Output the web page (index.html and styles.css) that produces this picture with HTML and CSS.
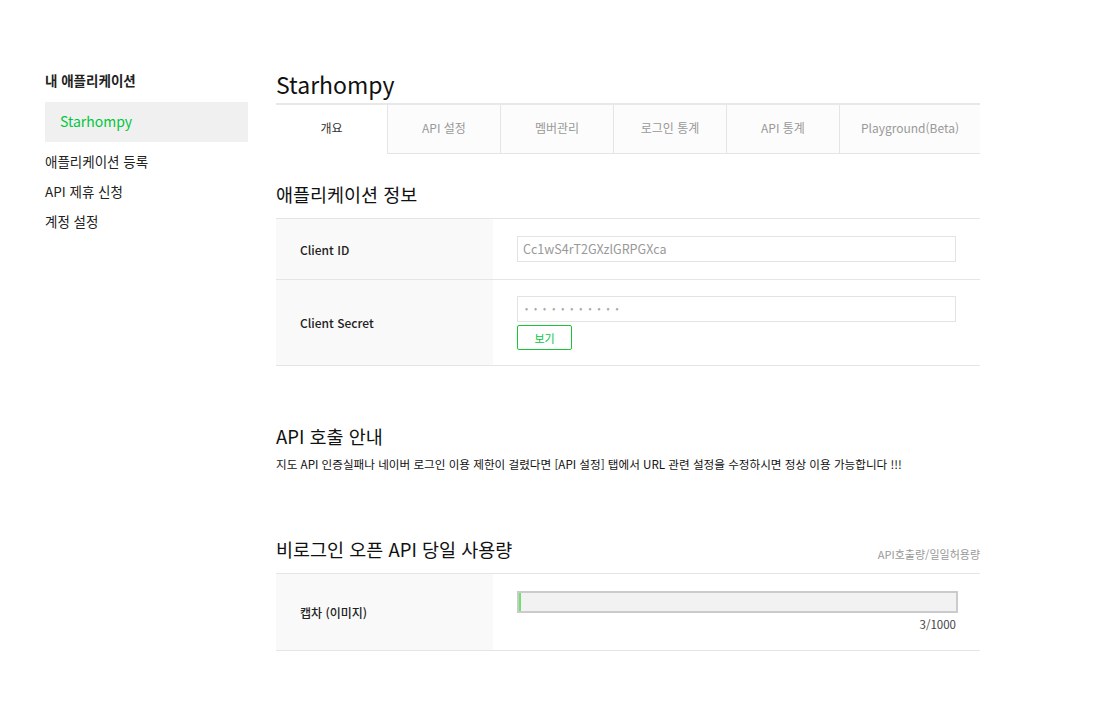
FILE: index.html
```html
<!DOCTYPE html>
<html lang="ko">
<head>
    <meta charset="UTF-8">
    <title>Starhompy - 내 애플리케이션</title>
    <link rel="stylesheet" href="styles.css">
</head>
<body>
    <div class="wrap">
        <div class="side">
            <h3 class="side-title">내 애플리케이션</h3>
            <div class="side-app">Starhompy</div>
            <ul class="side-menu">
                <li>애플리케이션 등록</li>
                <li>API 제휴 신청</li>
                <li>계정 설정</li>
            </ul>
        </div>

        <div class="content">
            <h2 class="app-name">Starhompy</h2>
            <ul class="tabs">
                <li class="on">개요</li>
                <li>API 설정</li>
                <li>멤버관리</li>
                <li>로그인 통계</li>
                <li>API 통계</li>
                <li class="last">Playground(Beta)</li>
            </ul>

            <h3 class="sec-title">애플리케이션 정보</h3>
            <table class="info">
                <tr>
                    <th>Client ID</th>
                    <td><div class="field">Cc1wS4rT2GXzlGRPGXca</div></td>
                </tr>
                <tr>
                    <th>Client Secret</th>
                    <td class="secret">
                        <div class="field dots">•••••••••••</div>
                        <button class="btn-view">보기</button>
                    </td>
                </tr>
            </table>

            <h3 class="sec-title api-title">API 호출 안내</h3>
            <p class="notice">지도 API 인증실패나 네이버 로그인 이용 제한이 걸렸다면 [API 설정] 탭에서 URL 관련 설정을 수정하시면 정상 이용 가능합니다 !!!</p>

            <div class="usage-head">
                <h3 class="sec-title">비로그인 오픈 API 당일 사용량</h3>
                <span class="usage-legend">API호출량/일일허용량</span>
            </div>
            <table class="info usage">
                <tr>
                    <th>캡차 (이미지)</th>
                    <td>
                        <div class="bar"><div class="bar-fill" style="width: 0.3%"></div></div>
                        <div class="bar-num">3/1000</div>
                    </td>
                </tr>
            </table>
        </div>
    </div>
</body>
</html>
```

FILE: styles.css
```css
body {
    margin: 0;
    background-color: #ffffff;
    color: #222;
    font-family: 'Noto Sans CJK KR', 'Noto Sans', sans-serif;
}

.wrap {
    display: flex;
    gap: 28px;
    padding: 68px 0 40px 45px;
}

/* 왼쪽 메뉴 */
.side {
    width: 203px;
    flex-shrink: 0;
}

.side-title {
    margin: 0;
    font-size: 13.5px;
    font-weight: bold;
    line-height: 24px;
}

.side-app {
    margin-top: 10px;
    height: 40px;
    line-height: 38px;
    padding-left: 15px;
    background-color: #f0f0f0;
    color: #00c73c;
    font-size: 14px;
}

.side-menu {
    list-style: none;
    margin: 4px 0 0;
    padding: 0;
}

.side-menu li {
    font-size: 13.5px;
    line-height: 30px;
    color: #222;
}

/* 본문 */
.content {
    width: 704px;
}

.app-name {
    margin: 0;
    font-size: 23px;
    font-weight: normal;
    line-height: 32px;
    color: #111;
}

.tabs {
    display: flex;
    list-style: none;
    margin: 3px 0 0;
    padding: 0;
    border-top: 2px solid #e8e8e8;
}

.tabs li {
    width: 112px;
    height: 48px;
    line-height: 46px;
    text-align: center;
    font-size: 12px;
    color: #999;
    background-color: #fcfcfc;
    border-left: 1px solid #e5e5e5;
    border-bottom: 1px solid #e5e5e5;
}

.tabs li.on {
    width: 111px;
    border-left: none;
    border-bottom-color: #ffffff;
    background-color: #ffffff;
    color: #333;
}

.tabs li.last {
    flex: 1;
}

.sec-title {
    margin: 26px 0 10px;
    font-size: 18.5px;
    font-weight: normal;
    line-height: 28px;
    color: #111;
}

.info {
    width: 100%;
    border-collapse: collapse;
    border-top: 1px solid #e5e5e5;
}

.info th {
    width: 192px;
    padding-left: 24px;
    text-align: left;
    font-size: 12px;
    font-weight: 500;
    color: #222;
    background-color: #f9f9f9;
    border-bottom: 1px solid #e5e5e5;
}

.info td {
    padding: 16px 24px 16px 24px;
    border-bottom: 1px solid #e5e5e5;
}

.info tr:first-child td {
    height: 28px;
}

.field {
    height: 24px;
    line-height: 24px;
    padding: 0 5px;
    border: 1px solid #e3e3e3;
    font-size: 12.5px;
    color: #999;
}

.field.dots {
    padding-left: 7px;
    font-size: 9px;
    letter-spacing: 6px;
    color: #aaa;
}

.secret {
    padding-bottom: 15px !important;
}

.btn-view {
    display: block;
    margin-top: 3px;
    width: 55px;
    height: 25px;
    background-color: #ffffff;
    border: 1px solid #19c63a;
    border-radius: 2px;
    color: #00c73c;
    font-family: inherit;
    font-size: 11px;
    padding: 0;
}

.api-title {
    margin-top: 56px;
    margin-bottom: 5px;
}

.notice {
    margin: 0;
    font-size: 11.6px;
    line-height: 18px;
    color: #111;
}

.usage-head {
    display: flex;
    justify-content: space-between;
    align-items: flex-end;
    margin-top: 62px;
    margin-bottom: 10px;
}

.usage-head .sec-title {
    margin: 0;
}

.usage-legend {
    font-size: 11px;
    color: #999;
    line-height: 18px;
}

.usage td {
    padding: 17px 22px 19px 24px;
}

.bar {
    height: 18px;
    border: 2px solid #cbcbcb;
    background-color: #f2f2f2;
}

.bar-fill {
    height: 100%;
    min-width: 2px;
    background-color: #6de36d;
}

.bar-num {
    margin-top: 4px;
    text-align: right;
    padding-right: 2px;
    font-size: 11.5px;
    color: #444;
    line-height: 14px;
}
```
